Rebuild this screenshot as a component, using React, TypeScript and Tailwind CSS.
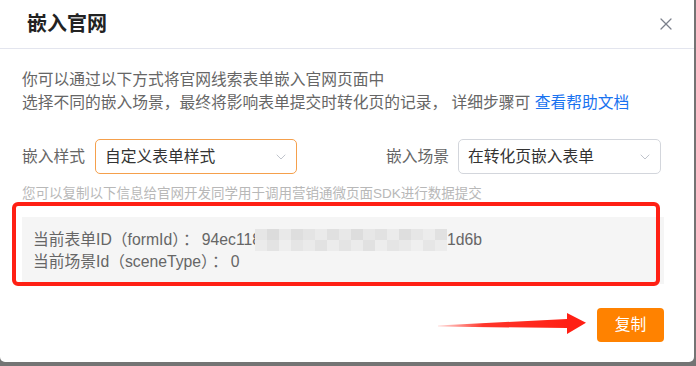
import { X, ChevronDown } from 'lucide-react';

const FONT = '"Liberation Sans", "Noto Sans CJK SC", sans-serif';

// blurred-out part of the form id (mosaic cells)
const MOSAIC = [
  ['#e6e6e6', '#dcdcdc', '#e9e9e9', '#dedede', '#e4e4e4', '#eaeaea', '#e0e0e0', '#e8e8e8', '#dddddd', '#e7e7e7', '#e2e2e2', '#ebebeb', '#dedede', '#e6e6e6', '#ececec', '#e1e1e1'],
  ['#ebebeb', '#e3e3e3', '#eeeeee', '#e5e5e5', '#eaeaea', '#e2e2e2', '#ececec', '#e4e4e4', '#ebebeb', '#e1e1e1', '#ededed', '#e5e5e5', '#e9e9e9', '#efefef', '#e6e6e6', '#ececec'],
];

function SelectBox({ value, active, width }: { value: string; active?: boolean; width: string }) {
  return (
    <div
      className={`flex h-[35px] items-center justify-between rounded-[5px] border bg-white pl-[9px] pr-[7px] ${width} ${
        active ? 'border-[#f5a04c]' : 'border-[#d3d6dc]'
      }`}
    >
      <span className="text-[15.75px] text-[#333]">{value}</span>
      <ChevronDown className="h-[16px] w-[16px] text-[#c0c4cc]" strokeWidth={1.5} />
    </div>
  );
}

export default function App() {
  return (
    <div className="h-[366px] w-[696px] overflow-hidden bg-[#747474]" style={{ fontFamily: FONT }}>
      <div className="relative flex h-[362px] w-[694px] flex-col rounded-b-[5px] bg-white">
        <div className="flex h-[49px] shrink-0 items-center justify-between border-b border-[#e3e5ee] pl-[27px] pr-[18px]">
          <span className="text-[20px] font-bold text-[#222]">嵌入官网</span>
          <X className="h-[20px] w-[20px] text-[#7c818c]" strokeWidth={1.5} />
        </div>

        <div className="flex flex-col px-[22px] pt-[19px]">
          <div className="text-[15.75px] leading-[23px] text-[#666]">
            <div>你可以通过以下方式将官网线索表单嵌入官网页面中</div>
            <div>
              选择不同的嵌入场景，最终将影响表单提交时转化页的记录， 详细步骤可{' '}
              <span className="text-[#1a73f0]">查看帮助文档</span>
            </div>
          </div>

          <div className="mt-[25px] flex items-center">
            <div className="flex items-center gap-[10px]">
              <span className="text-[15.75px] text-[#666]">嵌入样式</span>
              <SelectBox value="自定义表单样式" active width="w-[202px]" />
            </div>
            <div className="ml-[89px] flex items-center gap-[9px]">
              <span className="text-[15.75px] text-[#666]">嵌入场景</span>
              <SelectBox value="在转化页嵌入表单" width="w-[203px]" />
            </div>
          </div>

          <div className="mt-[11px] text-[13.5px] leading-[18px] text-[#b8b8b8]">
            您可以复制以下信息给官网开发同学用于调用营销通微页面SDK进行数据提交
          </div>

          <div className="mt-[14px] h-[67px] w-[642px] bg-[#f5f5f5] pl-[11px] pt-[12px] text-[15.75px] leading-[22px] text-[#666]">
            <div className="flex items-center">
              <span>
                当前表单ID（formId）<span className="px-[3px]">：</span>94ec118
              </span>
              <span className="ml-[-6px] inline-flex flex-col">
                {MOSAIC.map((row, r) => (
                  <span key={r} className="flex">
                    {row.map((c, i) => (
                      <span key={i} className="h-[11px] w-[12px]" style={{ backgroundColor: c }} />
                    ))}
                  </span>
                ))}
              </span>
              <span>1d6b</span>
            </div>
            <div>
              当前场景Id（sceneType）<span className="px-[3px]">：</span>0
            </div>
          </div>

          <div className="mt-[24px] flex justify-end pr-[8px]">
            <button className="h-[34px] w-[67px] rounded-[4px] bg-[#ff8200] text-[15.75px] text-white">
              复制
            </button>
          </div>
        </div>

        {/* red annotation frame */}
        <div className="absolute left-[12px] top-[202px] h-[84px] w-[648px] rounded-[6px] border-[4px] border-[#ff2014]" />

        {/* red annotation arrow */}
        <svg className="absolute left-[430px] top-[308px]" width="164" height="32" viewBox="430 308 164 32">
          <defs>
            <linearGradient id="tail" x1="438" y1="0" x2="567" y2="0" gradientUnits="userSpaceOnUse">
              <stop offset="0" stopColor="#ff2014" stopOpacity="0.15" />
              <stop offset="0.35" stopColor="#ff2014" stopOpacity="0.9" />
              <stop offset="1" stopColor="#ff2014" />
            </linearGradient>
          </defs>
          <polygon
            points="438,325.5 567,319 567,313 586,322.8 567,334 567,328 438,326.6"
            fill="url(#tail)"
          />
        </svg>
      </div>
    </div>
  );
}
